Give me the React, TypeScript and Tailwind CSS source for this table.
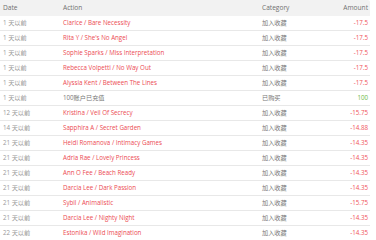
import React from 'react';

type Row = { date: string; action: string; link: boolean; category: string; amount: string };

const rows: Row[] = [
  { date: '1 天以前', action: 'Clarice / Bare Necessity', link: true, category: '加入收藏', amount: '-17.5' },
  { date: '1 天以前', action: "Rita Y / She's No Angel", link: true, category: '加入收藏', amount: '-17.5' },
  { date: '1 天以前', action: 'Sophie Sparks / Miss Interpretation', link: true, category: '加入收藏', amount: '-17.5' },
  { date: '1 天以前', action: 'Rebecca Volpetti / No Way Out', link: true, category: '加入收藏', amount: '-17.5' },
  { date: '1 天以前', action: 'Alyssia Kent / Between The Lines', link: true, category: '加入收藏', amount: '-17.5' },
  { date: '1 天以前', action: '100账户已充值', link: false, category: '已购买', amount: '100' },
  { date: '12 天以前', action: 'Kristina / Veil Of Secrecy', link: true, category: '加入收藏', amount: '-15.75' },
  { date: '14 天以前', action: 'Sapphira A / Secret Garden', link: true, category: '加入收藏', amount: '-14.88' },
  { date: '21 天以前', action: 'Heidi Romanova / Intimacy Games', link: true, category: '加入收藏', amount: '-14.35' },
  { date: '21 天以前', action: 'Adria Rae / Lovely Princess', link: true, category: '加入收藏', amount: '-14.35' },
  { date: '21 天以前', action: 'Ann O Fee / Beach Ready', link: true, category: '加入收藏', amount: '-14.35' },
  { date: '21 天以前', action: 'Darcia Lee / Dark Passion', link: true, category: '加入收藏', amount: '-14.35' },
  { date: '21 天以前', action: 'Sybil / Animalistic', link: true, category: '加入收藏', amount: '-15.75' },
  { date: '21 天以前', action: 'Darcia Lee / Nighty Night', link: true, category: '加入收藏', amount: '-14.35' },
  { date: '22 天以前', action: 'Estonika / Wild Imagination', link: true, category: '加入收藏', amount: '-14.35' },
];

const cols = 'grid grid-cols-[60px_199px_1fr_auto] items-center';

export default function App() {
  return (
    <div
      className="w-[376px] h-[240px] overflow-hidden bg-white text-[6.2px] leading-none"
      style={{ fontFamily: '"Open Sans", "Noto Sans CJK SC", sans-serif' }}
    >
      <div className="w-[370px]">
        {/* header */}
        <div className={`${cols} h-[16px] bg-[#f2f2f2] rounded-tr-[2px] text-[#707070] text-[6.6px] pl-[3px] pr-[2px]`}>
          <span>Date</span>
          <span>Action</span>
          <span>Category</span>
          <span className="text-right">Amount</span>
        </div>
        {rows.map((r, i) => (
          <div key={i} className={`${cols} h-[15px] border-b border-[#e8e8e8] pl-[3px] pr-[2px]`}>
            <span className="text-[#999]">{r.date}</span>
            <span className={r.link ? 'text-[#ec4a52]' : 'text-[#777]'}>{r.action}</span>
            <span className="text-[#777]">{r.category}</span>
            <span className={`text-right ${r.amount.startsWith('-') ? 'text-[#f0545b]' : 'text-[#6cba3f]'}`}>
              {r.amount}
            </span>
          </div>
        ))}
      </div>
    </div>
  );
}
